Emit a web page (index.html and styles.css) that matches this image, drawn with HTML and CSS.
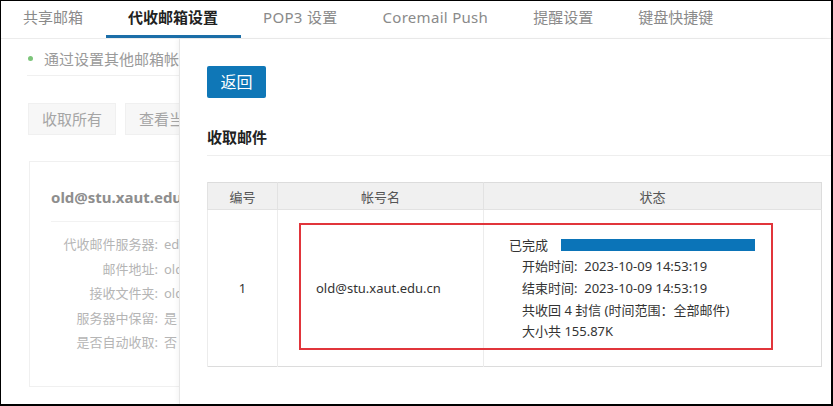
FILE: index.html
```html
<!DOCTYPE html>
<html lang="zh-CN">
<head>
	<meta charset="UTF-8">
	<title>代收邮箱设置</title>
	<link rel="stylesheet" href="styles.css">
</head>
<body>
	<div class="frame">
		<ul class="tabs">
			<li>共享邮箱</li>
			<li class="active">代收邮箱设置</li>
			<li class="en">POP3 设置</li>
			<li class="en">Coremail Push</li>
			<li>提醒设置</li>
			<li>键盘快捷键</li>
		</ul>
		<div class="main">
			<div class="page">
				<p class="notice"><i class="dot"></i>通过设置其他邮箱帐户，可以将其他邮箱的邮件收取到本邮箱</p>
				<div class="btns">
					<span class="btn">收取所有</span>
					<span class="btn">查看当前收取状态</span>
				</div>
				<div class="card">
					<h3>old@stu.xaut.edu.cn</h3>
					<ul class="info">
						<li><span class="k">代收邮件服务器:</span>edu.xaut.edu.cn</li>
						<li><span class="k">邮件地址:</span>old@stu.xaut.edu.cn</li>
						<li><span class="k">接收文件夹:</span>old@stu.xaut.edu.cn</li>
						<li><span class="k">服务器中保留:</span>是</li>
						<li><span class="k">是否自动收取:</span>否</li>
					</ul>
				</div>
			</div>
			<div class="panel">
				<a class="back" href="javascript:;">返回</a>
				<h2 class="title">收取邮件</h2>
				<div class="tablewrap">
					<table class="list">
						<thead>
							<tr>
								<th class="c1">编号</th>
								<th class="c2">帐号名</th>
								<th class="c3">状态</th>
							</tr>
						</thead>
						<tbody>
							<tr>
								<td class="c1">1</td>
								<td class="c2 acct">old@stu.xaut.edu.cn</td>
								<td class="c3 status">
									<div class="done">已完成<span class="bar"></span></div>
									<div class="line">开始时间:&nbsp; 2023-10-09 14:53:19</div>
									<div class="line">结束时间:&nbsp; 2023-10-09 14:53:19</div>
									<div class="line">共收回 4 封信 (时间范围：全部邮件)</div>
									<div class="line">大小共 155.87K</div>
								</td>
							</tr>
						</tbody>
					</table>
					<div class="mark"></div>
				</div>
			</div>
		</div>
	</div>
</body>
</html>
```

FILE: styles.css
```css
*{
	margin: 0;
	padding: 0;
	box-sizing: border-box;
}
body{
	font-family: "Noto Sans", "Noto Sans CJK SC", sans-serif;
	background: #fff;
}
.frame{
	width: 833px;
	height: 406px;
	border: 1px solid #000;
	border-right-width: 2px;
	border-bottom-width: 2px;
	overflow: hidden;
	display: flex;
	flex-direction: column;
}
.tabs{
	list-style: none;
	display: flex;
	height: 38px;
	border-bottom: 1px solid #ececec;
}
.tabs li{
	height: 37px;
	line-height: 33px;
	padding: 0 22.5px;
	font-size: 15px;
	color: #8a8a8a;
	border-bottom: 3px solid transparent;
	white-space: nowrap;
}
.tabs li:first-child{
	padding-left: 22px;
}
.tabs li.en{
	letter-spacing: 0.3px;
}
.tabs li.active{
	color: #222;
	font-weight: bold;
	border-bottom-color: #1b6ea8;
}
.main{
	flex: 1;
	position: relative;
}
.page{
	width: 180px;
	height: 100%;
	overflow: hidden;
	padding-left: 26px;
}
.notice{
	display: flex;
	align-items: center;
	height: 37px;
	padding: 8px 0 6px 1px;
	border-bottom: 1px solid #f0f0f0;
	font-size: 15px;
	color: #9a9a9a;
	white-space: nowrap;
}
.dot{
	flex: none;
	width: 5px;
	height: 5px;
	border-radius: 50%;
	background: #7cc57a;
	margin: 0 11px 0 0;
}
.btns{
	display: flex;
	gap: 9px;
	margin-top: 27px;
	padding-left: 1px;
}
.btn{
	flex: none;
	height: 32px;
	line-height: 30px;
	padding: 0 13px;
	font-size: 15px;
	color: #a5a5a5;
	background: #f7f7f7;
	border: 1px solid #f0f0f0;
	white-space: nowrap;
}
.card{
	margin: 26px 0 0 2px;
	width: 400px;
	height: 226px;
	border: 1px solid #f0f0f0;
	padding: 23px 0 0 21px;
}
.card h3{
	font-size: 15px;
	line-height: 24px;
	color: #8e8e8e;
	padding-bottom: 12px;
	border-bottom: 1px solid #f2f2f2;
}
.info{
	list-style: none;
	padding-top: 10px;
}
.info li{
	font-size: 13px;
	line-height: 24.5px;
	color: #b5b5b5;
	white-space: nowrap;
}
.info .k{
	display: inline-block;
	width: 107px;
	text-align: right;
	margin-right: 6px;
}
.panel{
	position: absolute;
	left: 178px;
	top: 0;
	right: 0;
	bottom: 0;
	background: #fff;
	border-left: 1px solid #e6e6e6;
	box-shadow: -2px 0 4px rgba(0,0,0,0.04);
	padding: 27px 0 0 27px;
}
.back{
	display: block;
	width: 59px;
	height: 32px;
	line-height: 32px;
	text-align: center;
	background: #0f77b7;
	color: #fff;
	font-size: 16px;
	border-radius: 2px;
	text-decoration: none;
}
.title{
	margin-top: 28px;
	font-size: 15px;
	line-height: 22px;
	color: #222;
	padding-bottom: 7px;
	border-bottom: 1px solid #eeeeee;
}
.tablewrap{
	position: relative;
	margin-top: 26px;
	width: 615px;
}
.list{
	width: 615px;
	border-collapse: collapse;
	border: 1px solid #dcdcdc;
	font-size: 13px;
	color: #333;
}
.list th{
	height: 27px;
	background: #f0f0f0;
	font-weight: normal;
	color: #555;
	font-size: 13px;
	border-left: 1px solid #e2e2e2;
	border-bottom: 1px solid #e2e2e2;
}
.list td{
	height: 157px;
	border-left: 1px solid #ececec;
	text-align: center;
}
.c1{
	width: 70px;
}
.c2{
	width: 206px;
}
.list td.acct{
	text-align: left;
	padding-left: 38px;
}
.list td.status{
	text-align: left;
	vertical-align: top;
	padding: 24px 0 0 25px;
}
.done{
	display: flex;
	align-items: center;
	line-height: 22px;
}
.bar{
	width: 194px;
	height: 12px;
	background: #0b74b8;
	margin-left: 13px;
}
.line{
	line-height: 21.8px;
	padding-left: 13px;
	white-space: nowrap;
}
.mark{
	position: absolute;
	left: 92px;
	top: 41px;
	width: 474px;
	height: 127px;
	border: 2px solid #e1353b;
}
```
